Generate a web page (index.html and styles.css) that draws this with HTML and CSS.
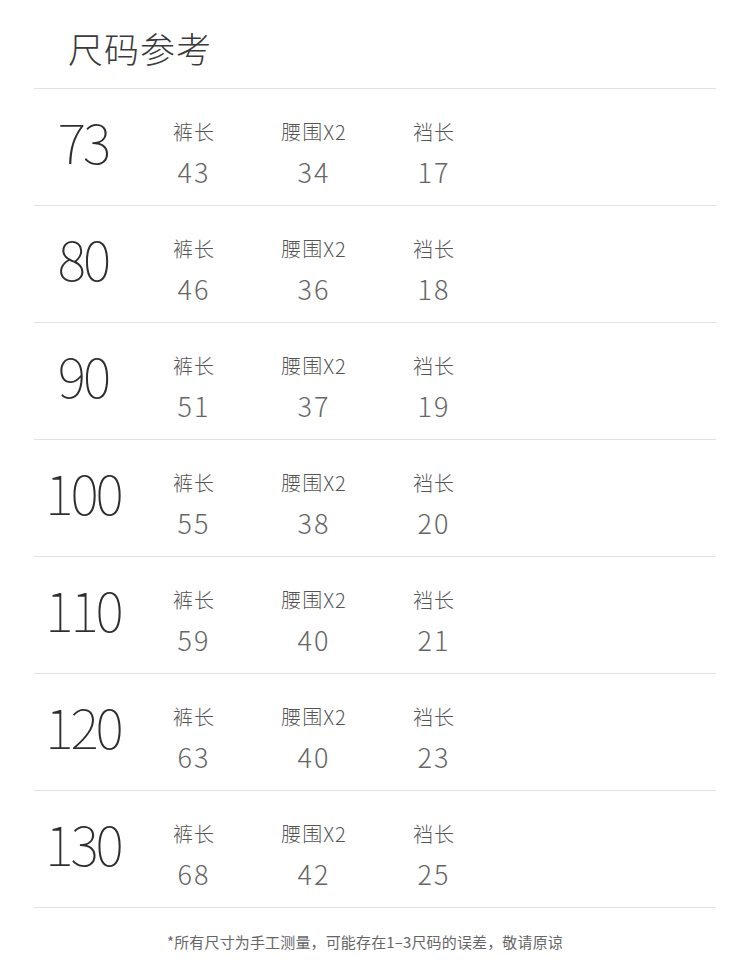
FILE: index.html
```html
<!DOCTYPE html>
<html lang="zh-CN">
<head>
<meta charset="utf-8">
<title>尺码参考</title>
<link rel="stylesheet" href="styles.css">
</head>
<body>
<div class="page">
  <div class="header"><h1 class="title">尺码参考</h1></div>
  <div class="table">
    <div class="row">
      <div class="size">73</div>
      <div class="cell"><div class="label">裤长</div><div class="value">43</div></div>
      <div class="cell"><div class="label">腰围X2</div><div class="value">34</div></div>
      <div class="cell"><div class="label">裆长</div><div class="value">17</div></div>
    </div>
    <div class="row">
      <div class="size">80</div>
      <div class="cell"><div class="label">裤长</div><div class="value">46</div></div>
      <div class="cell"><div class="label">腰围X2</div><div class="value">36</div></div>
      <div class="cell"><div class="label">裆长</div><div class="value">18</div></div>
    </div>
    <div class="row">
      <div class="size">90</div>
      <div class="cell"><div class="label">裤长</div><div class="value">51</div></div>
      <div class="cell"><div class="label">腰围X2</div><div class="value">37</div></div>
      <div class="cell"><div class="label">裆长</div><div class="value">19</div></div>
    </div>
    <div class="row">
      <div class="size">100</div>
      <div class="cell"><div class="label">裤长</div><div class="value">55</div></div>
      <div class="cell"><div class="label">腰围X2</div><div class="value">38</div></div>
      <div class="cell"><div class="label">裆长</div><div class="value">20</div></div>
    </div>
    <div class="row">
      <div class="size">110</div>
      <div class="cell"><div class="label">裤长</div><div class="value">59</div></div>
      <div class="cell"><div class="label">腰围X2</div><div class="value">40</div></div>
      <div class="cell"><div class="label">裆长</div><div class="value">21</div></div>
    </div>
    <div class="row">
      <div class="size">120</div>
      <div class="cell"><div class="label">裤长</div><div class="value">63</div></div>
      <div class="cell"><div class="label">腰围X2</div><div class="value">40</div></div>
      <div class="cell"><div class="label">裆长</div><div class="value">23</div></div>
    </div>
    <div class="row">
      <div class="size">130</div>
      <div class="cell"><div class="label">裤长</div><div class="value">68</div></div>
      <div class="cell"><div class="label">腰围X2</div><div class="value">42</div></div>
      <div class="cell"><div class="label">裆长</div><div class="value">25</div></div>
    </div>
  </div>
  <p class="note">*所有尺寸为手工测量，可能存在1–3尺码的误差，敬请原谅</p>
</div>
</body>
</html>
```

FILE: styles.css
```css
html, body {
  margin: 0;
  padding: 0;
  background: #ffffff;
}

body {
  font-family: "Noto Sans CJK SC", "Noto Sans", sans-serif;
  color: #555555;
}

.page {
  width: 682px;
  margin: 0 34px;
}

.header {
  padding: 30px 0 23px 34px;
  border-bottom: 1px solid #e2e2e2;
}

.title {
  margin: 0;
  font-size: 35px;
  line-height: 35px;
  font-weight: 300;
  color: #3a3a3a;
  letter-spacing: 1px;
}

.table {
  display: flex;
  flex-direction: column;
}

.row {
  display: grid;
  grid-template-columns: 100px 120px 120px 120px;
  height: 116px;
  border-bottom: 1px solid #e2e2e2;
}

.size {
  align-self: center;
  text-align: center;
  font-size: 54px;
  line-height: 54px;
  font-weight: 100;
  color: #2e2e2e;
  letter-spacing: -3px;
  padding-bottom: 12px;
  padding-right: 2px;
}

.cell {
  display: flex;
  flex-direction: column;
  align-items: center;
  padding-top: 33px;
}

.label {
  font-size: 20px;
  line-height: 20px;
  font-weight: 300;
  color: #555555;
  letter-spacing: 1px;
}

.value {
  margin-top: 16px;
  font-size: 27px;
  line-height: 28px;
  color: #666666;
  letter-spacing: 2px;
  font-weight: 300;
}

.note {
  margin: 24px 20px 0 0;
  text-align: center;
  font-size: 15px;
  line-height: 20px;
  color: #666666;
  letter-spacing: 0.15px;
}
```
